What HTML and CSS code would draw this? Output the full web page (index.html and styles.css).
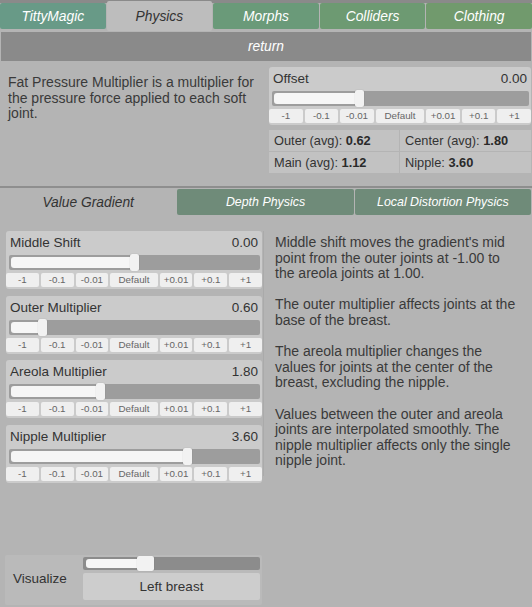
FILE: index.html
```html
<!DOCTYPE html>
<html>
<head>
<meta charset="utf-8">
<link rel="stylesheet" href="styles.css">
</head>
<body>
<div class="page">
  <nav class="tabs">
    <div class="tab g1">TittyMagic</div>
    <div class="tab active">Physics</div>
    <div class="tab g2">Morphs</div>
    <div class="tab g3">Colliders</div>
    <div class="tab g4">Clothing</div>
  </nav>
  <div class="return">return</div>

  <section class="upper">
    <p class="desc">Fat Pressure Multiplier is a multiplier for the pressure force applied to each soft joint.</p>
    <div class="side">
      <div class="panel">
        <div class="panel-head"><span>Offset</span><span>0.00</span></div>
        <div class="track"><div class="fill" style="width:33%"></div></div>
        <div class="btns"><span>-1</span><span>-0.1</span><span>-0.01</span><span>Default</span><span>+0.01</span><span>+0.1</span><span>+1</span></div>
      </div>
      <div class="stats">
        <div class="stat">Outer (avg): <b>0.62</b></div>
        <div class="stat">Center (avg): <b>1.80</b></div>
        <div class="stat">Main (avg): <b>1.12</b></div>
        <div class="stat">Nipple: <b>3.60</b></div>
      </div>
    </div>
  </section>

  <nav class="subtabs">
    <div class="subtab active">Value Gradient</div>
    <div class="subtab">Depth Physics</div>
    <div class="subtab">Local Distortion Physics</div>
  </nav>

  <section class="lower">
    <div class="sliders">
      <div class="panel">
        <div class="panel-head"><span>Middle Shift</span><span>0.00</span></div>
        <div class="track"><div class="fill" style="width:49%"></div></div>
        <div class="btns"><span>-1</span><span>-0.1</span><span>-0.01</span><span>Default</span><span>+0.01</span><span>+0.1</span><span>+1</span></div>
      </div>
      <div class="panel">
        <div class="panel-head"><span>Outer Multiplier</span><span>0.60</span></div>
        <div class="track"><div class="fill" style="width:12.2%"></div></div>
        <div class="btns"><span>-1</span><span>-0.1</span><span>-0.01</span><span>Default</span><span>+0.01</span><span>+0.1</span><span>+1</span></div>
      </div>
      <div class="panel">
        <div class="panel-head"><span>Areola Multiplier</span><span>1.80</span></div>
        <div class="track"><div class="fill" style="width:35.6%"></div></div>
        <div class="btns"><span>-1</span><span>-0.1</span><span>-0.01</span><span>Default</span><span>+0.01</span><span>+0.1</span><span>+1</span></div>
      </div>
      <div class="panel">
        <div class="panel-head"><span>Nipple Multiplier</span><span>3.60</span></div>
        <div class="track"><div class="fill" style="width:70.3%"></div></div>
        <div class="btns"><span>-1</span><span>-0.1</span><span>-0.01</span><span>Default</span><span>+0.01</span><span>+0.1</span><span>+1</span></div>
      </div>
    </div>
    <div class="help">
      <p>Middle shift moves the gradient's mid point from the outer joints at -1.00 to the areola joints at 1.00.</p>
      <p>The outer multiplier affects joints at the base of the breast.</p>
      <p>The areola multiplier changes the values for joints at the center of the breast, excluding the nipple.</p>
      <p>Values between the outer and areola joints are interpolated smoothly. The nipple multiplier affects only the single nipple joint.</p>
    </div>
  </section>

  <div class="visualize">
    <span class="vis-label">Visualize</span>
    <div class="vis-ctrl">
      <div class="track dark"><div class="fill wide" style="width:33.5%"></div></div>
      <div class="select">Left breast</div>
    </div>
  </div>
</div>
</body>
</html>
```

FILE: styles.css
```css
* { box-sizing: border-box; }
html, body { margin: 0; padding: 0; }
body {
  background: #b4b4b4;
  font-family: "Liberation Sans", Arial, sans-serif;
  color: #3a3a3a;
}
.page {
  height: 607px;
  display: flex;
  flex-direction: column;
}

/* top tabs */
.tabs {
  display: flex;
  gap: 1px;
  height: 31px;
  background: linear-gradient(#8a8a8a 0 3px, #b4b4b4 3px);
}
.tab {
  flex: 1;
  display: flex;
  align-items: center;
  justify-content: center;
  font-style: italic;
  font-size: 13.8px;
  color: #fff;
  margin-top: 3px;
  height: 26px;
  border-radius: 2px;
}
.tab.g1 { background: #689a87; }
.tab.g2 { background: #6a9a79; }
.tab.g3 { background: #6d9a72; }
.tab.g4 { background: #719a6d; }
.tab.active {
  background: #bdbdbd;
  color: #333;
  margin-top: 1px;
  height: 30px;
}
.return {
  margin: 1px 1px 0;
  height: 29px;
  background: #8a8a8a;
  color: #fff;
  font-style: italic;
  font-size: 13.8px;
  display: flex;
  align-items: center;
  justify-content: center;
}

/* upper */
.upper {
  display: flex;
  height: 127px;
  border-bottom: 2px solid #8e8e8e;
}
.desc {
  margin: 0;
  padding: 14px 8px 0 8px;
  width: 268px;
  font-size: 14px;
  line-height: 15.6px;
}
.side {
  flex: 1;
  padding: 6px 1px 0 1px;
}
.panel {
  background: #cbcbcb;
  border-radius: 3px;
  padding: 3px 2px 2px 3px;
  height: 58px;
  display: flex;
  flex-direction: column;
}
.panel-head {
  display: flex;
  justify-content: space-between;
  font-size: 13.5px;
  line-height: 15px;
  padding: 1px 2px 0 1px;
  color: #333;
  height: 21px;
}
.track {
  position: relative;
  height: 15px;
  background: #9d9d9d;
  border-radius: 2px;
  margin: 0 0 3px 0;
}
.fill {
  position: relative;
  height: 11px;
  margin-top: 2px;
  margin-left: 2px;
  background: #f6f6f6;
  border-radius: 3px 0 0 3px;
}
.fill::after {
  content: "";
  position: absolute;
  right: -5px;
  top: -3px;
  width: 9px;
  height: 17px;
  background: #f2f2f2;
  border-radius: 2px;
  box-shadow: 0 0 1px rgba(0,0,0,0.3);
}
.btns {
  display: grid;
  grid-template-columns: 1fr 1fr 1fr 1.45fr 1fr 1fr 1fr;
  gap: 2px;
  margin: 0 -2px 0 -3px;
}
.btns span {
  height: 14px;
  background: #efefef;
  border-radius: 2px;
  font-size: 9.8px;
  line-height: 14px;
  text-align: center;
  color: #666;
}
.stats {
  margin-top: 5px;
  display: grid;
  grid-template-columns: 130px 1fr;
  gap: 1px;
}
.stat {
  background: #c2c2c2;
  height: 21px;
  font-size: 12.8px;
  line-height: 21px;
  padding-left: 5px;
  color: #333;
}
.stat b { color: #2a2a2a; }

/* subtabs */
.subtabs {
  display: flex;
  gap: 1px;
  height: 28px;
  padding-top: 1px;
  padding-right: 1px;
}
.subtab {
  flex: 1;
  display: flex;
  align-items: center;
  justify-content: center;
  font-style: italic;
  font-size: 12.4px;
  color: #fff;
  background: #6f8b79;
  border-radius: 2px;
  height: 26px;
}
.subtab.active {
  background: transparent;
  color: #333;
  font-size: 13.8px;
}

/* lower */
.lower {
  flex: 1;
  display: flex;
  padding-top: 15px;
}
.sliders {
  width: 263px;
  padding-left: 6px;
  padding-right: 1px;
  display: flex;
  flex-direction: column;
  gap: 6.5px;
}
.help {
  flex: 1;
  padding-left: 11px;
  padding-right: 12px;
  border-left: 1px solid #aaaaaa;
  height: 245px;
}
.help p {
  margin: 0 0 15.6px 0;
  font-size: 14px;
  line-height: 15.6px;
}
.help p:first-child { margin-top: 4px; }

/* visualize */
.visualize {
  margin: 0 270px 2px 5px;
  height: 50px;
  background: #bababa;
  border-radius: 2px;
  display: flex;
  align-items: center;
  padding: 2px 2px 5px 8px;
}
.vis-label {
  width: 70px;
  font-size: 13.5px;
  color: #333;
}
.vis-ctrl {
  flex: 1;
  display: flex;
  flex-direction: column;
  gap: 3px;
  align-self: stretch;
}
.track.dark {
  background: #8c8c8c;
  height: 13px;
  margin: 0;
}
.track.dark .fill { height: 9px; margin-top: 2px; margin-left: 3px; }
.track.dark .fill::after { width: 17px; right: -9px; height: 15px; top: -3px; }
.select {
  flex: 1;
  background: #cdcdcd;
  border-radius: 2px;
  font-size: 13.5px;
  display: flex;
  align-items: center;
  justify-content: center;
  color: #333;
}
```
